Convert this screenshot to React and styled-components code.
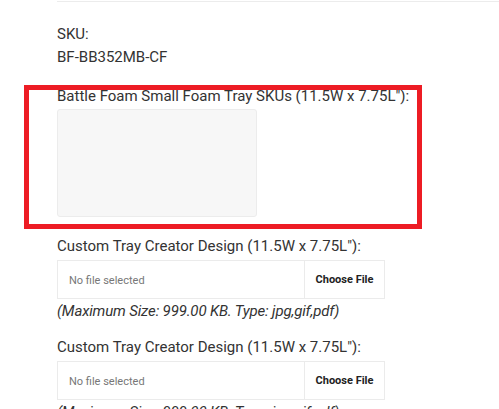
import React from "react";
import styled, { createGlobalStyle } from "styled-components";

const Global = createGlobalStyle`
  html, body { margin: 0; padding: 0; background: #fff; }
  body {
    font-family: Roboto, "Noto Sans", sans-serif;
    color: #333;
    -webkit-font-smoothing: antialiased;
  }
  * { box-sizing: border-box; }
`;

const Page = styled.div`
  padding: 1px 0 0 57px;
  width: 499px;
  overflow: hidden;
`;

const Rule = styled.div`
  height: 1px;
  background: #ececec;
  margin-right: -20px;
`;

const Info = styled.div`
  margin-top: 21px;
  font-size: 15px;
  line-height: 23px;
`;

const Field = styled.div`
  position: relative;
  margin-top: ${(p) => p.$gap}px;
`;

const Label = styled.div`
  font-size: 15px;
  line-height: 23px;
  color: #333;
  white-space: nowrap;
`;

const Swatch = styled.div`
  margin-top: 1px;
  width: 200px;
  height: 108px;
  background: #f7f7f7;
  border: 1px solid #ececec;
  border-radius: 3px;
`;

const FileBox = styled.div`
  margin-top: 2px;
  width: 328px;
  height: 39px;
  border: 1px solid #ebebeb;
  display: flex;
  align-items: center;
  font-size: 11px;
`;

const FileName = styled.span`
  flex: 1;
  padding-left: 11px;
  color: #777;
  padding-top: 2px;
`;

const ChooseButton = styled.span`
  width: 80px;
  align-self: stretch;
  border-left: 1px solid #ebebeb;
  display: flex;
  align-items: center;
  justify-content: center;
  font-weight: 700;
  color: #222;
`;

const Hint = styled.div`
  margin-top: 1px;
  font-size: 15px;
  line-height: 23px;
  font-style: italic;
  color: #333;
  letter-spacing: -0.15px;
  white-space: nowrap;
`;

const Highlight = styled.div`
  position: absolute;
  left: -33px;
  top: 0;
  width: 398px;
  height: 144px;
  border: 5px solid #ed1c24;
  pointer-events: none;
`;

const uploads = [
  { gap: 18 },
  { gap: 13 },
];

export default function App() {
  return (
    <>
      <Global />
      <Page>
        <Rule />
        <Info>
          <div>SKU:</div>
          <div>BF-BB352MB-CF</div>
        </Info>
        <Field $gap={16}>
          <Label>Battle Foam Small Foam Tray SKUs (11.5W x 7.75L"):</Label>
          <Swatch />
          <Highlight />
        </Field>
        {uploads.map((u, i) => (
          <Field key={i} $gap={u.gap}>
            <Label>Custom Tray Creator Design (11.5W x 7.75L"):</Label>
            <FileBox>
              <FileName>No file selected</FileName>
              <ChooseButton>Choose File</ChooseButton>
            </FileBox>
            <Hint>(Maximum Size: 999.00 KB. Type: jpg,gif,pdf)</Hint>
          </Field>
        ))}
      </Page>
    </>
  );
}
